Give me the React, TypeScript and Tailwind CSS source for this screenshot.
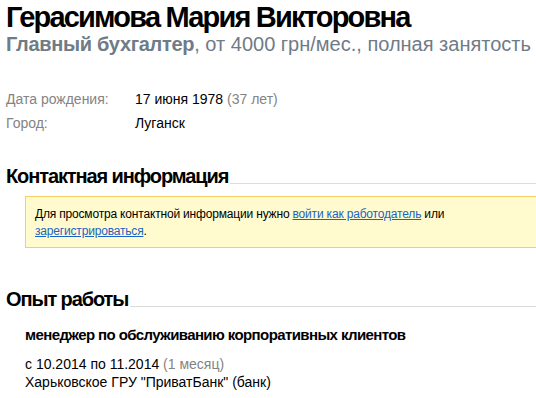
export default function App() {
  return (
    <div className="min-h-screen overflow-hidden bg-white pl-[6px] font-[family-name:'Liberation_Sans',Arial,sans-serif] text-black">
      <h1 className="whitespace-nowrap pt-[1px] text-[29px] font-bold leading-[32px] tracking-[-1.8px]">Герасимова Мария Викторовна</h1>
      <p className="whitespace-nowrap text-[20px] leading-[22px] text-[#6f7b87]">
        <b className="tracking-[-0.3px]">Главный бухгалтер</b>, от 4000 грн/мес., полная занятость
      </p>

      <div className="mt-[36px] space-y-[8px] text-[14px] leading-[16px]">
        <div className="flex">
          <span className="w-[129px] text-[#848484]">Дата рождения:</span>
          <span>
            17 июня 1978 <span className="text-[#848484]">(37 лет)</span>
          </span>
        </div>
        <div className="flex">
          <span className="w-[129px] text-[#848484]">Город:</span>
          <span>Луганск</span>
        </div>
      </div>

      <div className="mt-[33px] flex items-end">
        <h2 className="whitespace-nowrap text-[20px] font-bold leading-[24px] tracking-[-1.1px]">Контактная информация</h2>
        <div className="mb-[4px] ml-[2px] h-px flex-1 bg-[#dcdcdc]" />
      </div>

      <div className="ml-[19px] mt-[8px] -mr-[10px] border border-[#f7cd6a] bg-[#fffbcf] px-[9px] pb-[7px] pt-[9px] text-[12px] leading-[17px] tracking-[-0.18px]">
        Для просмотра контактной информации нужно{' '}
        <a href="#" className="text-[#1a63c9] underline">войти как работодатель</a> или
        <br />
        <a href="#" className="text-[#1a63c9] underline">зарегистрироваться</a>.
      </div>

      <div className="mt-[39px] flex items-end">
        <h2 className="whitespace-nowrap text-[20px] font-bold leading-[24px] tracking-[-1.1px]">Опыт работы</h2>
        <div className="mb-[4px] ml-[2px] h-px flex-1 bg-[#dcdcdc]" />
      </div>

      <div className="ml-[19px] mt-[15px]">
        <h3 className="whitespace-nowrap text-[15px] font-bold leading-[18px] tracking-[-0.6px]">менеджер по обслуживанию корпоративных клиентов</h3>
        <p className="mt-[11px] text-[14px] leading-[18px]">
          с 10.2014 по 11.2014 <span className="text-[#848484]">(1 месяц)</span>
        </p>
        <p className="text-[14px] leading-[18px]">Харьковское ГРУ "ПриватБанк" (банк)</p>
      </div>
    </div>
  );
}
